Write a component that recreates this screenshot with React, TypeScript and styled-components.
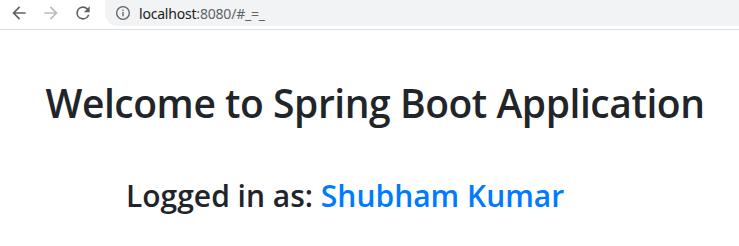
import * as React from 'react';
import styled, { createGlobalStyle } from 'styled-components';

const GlobalStyle = createGlobalStyle`
	html, body {
		margin: 0;
		padding: 0;
		background: #ffffff;
	}
	body {
		font-family: "Open Sans", "Noto Sans", sans-serif;
		width: 739px;
		height: 246px;
		overflow: hidden;
	}
`;

const Toolbar = styled.div`
	display: flex;
	align-items: flex-start;
	height: 30px;
	box-sizing: border-box;
	border-bottom: 1px solid #dadce0;
	background: #ffffff;
`;

const NavGroup = styled.div`
	display: flex;
	padding-left: 3px;
`;

const NavButton = styled.div<{ $dim?: boolean }>`
	display: flex;
	align-items: center;
	justify-content: center;
	width: 32px;
	height: 26px;
	color: ${props => (props.$dim ? '#bcbcbc' : '#5f6368')};
`;

const Omnibox = styled.div`
	display: flex;
	align-items: center;
	flex: 1;
	height: 26px;
	margin-left: 6px;
	padding-left: 10px;
	background: #f1f3f4;
	border-bottom-left-radius: 13px;
	font-family: "Noto Sans", "Open Sans", sans-serif;
	font-size: 14px;
	letter-spacing: -0.2px;
`;

const InfoIcon = styled.div`
	display: flex;
	color: #5f6368;
	margin-right: 8px;
`;

const Host = styled.span`
	color: #202124;
`;

const UrlRest = styled.span`
	color: #5f6368;
`;

const Page = styled.div`
	padding-top: 50px;
`;

const Title = styled.h1`
	margin: 0;
	text-align: center;
	padding-left: 11px;
	font-size: 39px;
	font-weight: 600;
	line-height: 1.2;
	color: #212529;
	letter-spacing: -0.45px;
`;

const UserLine = styled.h3`
	margin: 51px 0 0 126px;
	font-size: 30px;
	font-weight: 600;
	line-height: 1.2;
	color: #212529;
	letter-spacing: 0;
`;

const UserName = styled.span`
	color: #007bff;
`;

const BackIcon = () => (
	<svg width="20" height="20" viewBox="0 0 24 24" fill="none">
		<path d="M20 11H7.83l5.59-5.59L12 4l-8 8 8 8 1.41-1.41L7.83 13H20v-2z" fill="currentColor" />
	</svg>
);

const ForwardIcon = () => (
	<svg width="20" height="20" viewBox="0 0 24 24" fill="none">
		<path d="M4 11h12.17l-5.59-5.59L12 4l8 8-8 8-1.41-1.41L16.17 13H4v-2z" fill="currentColor" />
	</svg>
);

const ReloadIcon = () => (
	<svg width="20" height="20" viewBox="0 0 24 24" fill="none">
		<path
			d="M17.65 6.35A7.96 7.96 0 0 0 12 4a8 8 0 1 0 7.73 10h-2.08A6 6 0 1 1 12 6c1.66 0 3.14.69 4.22 1.78L13 11h7V4l-2.35 2.35z"
			fill="currentColor"
		/>
	</svg>
);

const Info = () => (
	<svg width="16" height="16" viewBox="0 0 24 24" fill="none">
		<circle cx="12" cy="12" r="9.5" stroke="currentColor" strokeWidth="2" />
		<rect x="11" y="10.5" width="2" height="6.5" fill="currentColor" />
		<rect x="11" y="7" width="2" height="2" fill="currentColor" />
	</svg>
);

export default function App() {
	return (
		<>
			<GlobalStyle />
			<Toolbar>
				<NavGroup>
					<NavButton>
						<BackIcon />
					</NavButton>
					<NavButton $dim>
						<ForwardIcon />
					</NavButton>
					<NavButton>
						<ReloadIcon />
					</NavButton>
				</NavGroup>
				<Omnibox>
					<InfoIcon>
						<Info />
					</InfoIcon>
					<Host>localhost</Host>
					<UrlRest>:8080/#_=_</UrlRest>
				</Omnibox>
			</Toolbar>
			<Page>
				<Title>Welcome to Spring Boot Application</Title>
				<UserLine>
					Logged in as: <UserName>Shubham Kumar</UserName>
				</UserLine>
			</Page>
		</>
	);
}
